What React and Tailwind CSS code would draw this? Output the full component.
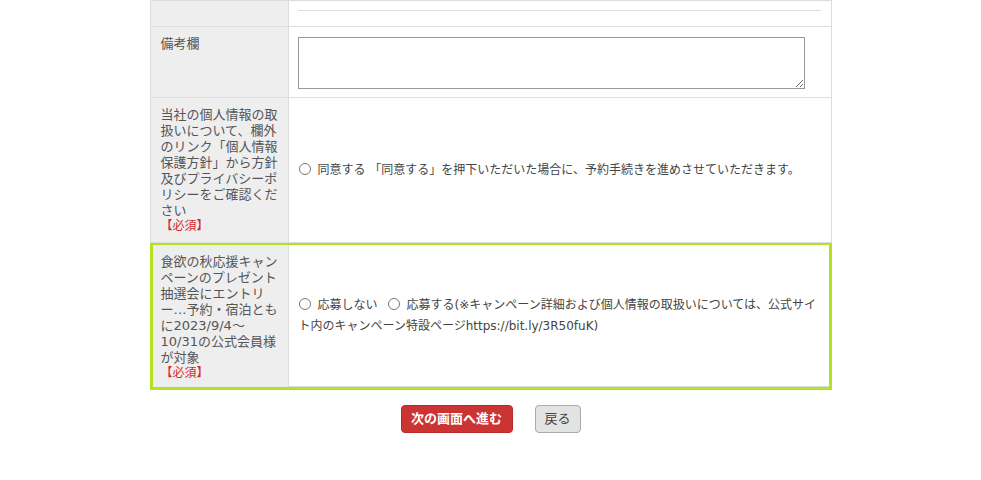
import React from "react";

const font = { fontFamily: '"DejaVu Sans", "Noto Sans CJK JP", sans-serif' };

function Radio({ name }) {
  return (
    <input
      type="radio"
      name={name}
      className="m-0 mr-[7px] inline-block h-[12px] w-[12px] align-[-1px] accent-gray-500"
    />
  );
}

export default function App() {
  return (
    <div className="min-h-[480px] w-full bg-white text-[13px] text-[#444]" style={font}>
      <div className="mx-auto w-[682px]">
        {/* row 0 */}
        <div className="flex h-[27px] border-x border-t border-b border-[#dddddd]">
          <div className="w-[138px] shrink-0 border-r border-[#dddddd] bg-[#eeeeee]" />
          <div className="flex-1 pl-[9px] pr-[10px] pt-[9px]">
            <div className="h-px bg-[#dddddd]" />
          </div>
        </div>
        {/* row 1 */}
        <div className="flex border-x border-b border-[#dddddd]">
          <div className="w-[138px] shrink-0 border-r border-[#dddddd] bg-[#eeeeee] px-[10px] pt-[9px] leading-[16px] text-[#555]">
            備考欄
          </div>
          <div className="flex-1 pl-[9px] pb-[8px] pt-[10px]">
            <textarea className="block h-[52px] w-[507px] border border-[#999999] bg-white" />
          </div>
        </div>
        {/* row 2 */}
        <div className="flex border-x border-b border-[#dddddd]">
          <div className="w-[138px] shrink-0 border-r border-[#dddddd] bg-[#eeeeee] px-[10px] pb-[8px] pt-[9px] leading-[16px] text-[#555]">
            <div>当社の個人情報の取扱いについて、欄外のリンク「個人情報保護方針」から方針及びプライバシーポリシーをご確認ください</div>
            <div className="text-[12px] leading-[15px] text-[#d42a2a]">【必須】</div>
          </div>
          <div className="flex flex-1 items-center pl-[10px] pr-[10px] text-[12px] leading-[21px]">
            <label>
              <Radio name="agree" />
              同意する 「同意する」を押下いただいた場合に、予約手続きを進めさせていただきます。
            </label>
          </div>
        </div>
        {/* row 3 */}
        <div className="flex border-[3px] border-t-[2px] border-[#b5e21f]">
          <div className="w-[136px] shrink-0 border-r border-[#dddddd] bg-[#eeeeee] px-[8px] pb-[6px] pt-[9px] leading-[16px] text-[#555]">
            <div>食欲の秋応援キャンペーンのプレゼント抽選会にエントリー…予約・宿泊ともに2023/9/4～10/31の公式会員様が対象</div>
            <div className="text-[12px] leading-[15px] text-[#d42a2a]">【必須】</div>
          </div>
          <div className="flex flex-1 items-center border-b border-[#dddddd] pl-[10px] pr-[8px] text-[12px] leading-[21px]">
            <p>
              <Radio name="entry" />
              <span className="mr-[10px]">応募しない</span>
              <Radio name="entry" />
              応募する(※キャンペーン詳細および個人情報の取扱いについては、公式サイト内のキャンペーン特設ページhttps://bit.ly/3R50fuK)
            </p>
          </div>
        </div>
        {/* buttons */}
        <div className="mt-[15px] flex justify-center gap-[22px]">
          <button className="h-[28px] w-[112px] rounded-[4px] border border-[#b82a2a] bg-[#cc3333] text-[13px] font-bold text-white">
            次の画面へ進む
          </button>
          <button className="h-[28px] w-[46px] rounded-[4px] border border-[#aaaaaa] bg-[#e3e3e3] text-[13px] text-[#444]">
            戻る
          </button>
        </div>
      </div>
    </div>
  );
}
